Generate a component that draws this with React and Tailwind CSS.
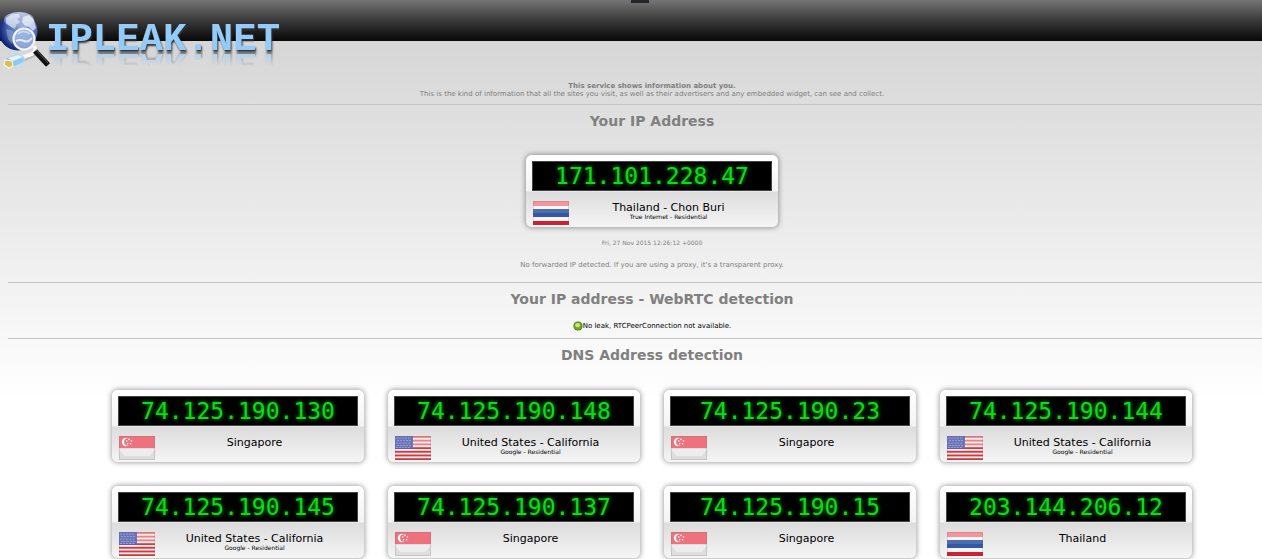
import React from 'react';

const mainAddress = {
  ip: '171.101.228.47',
  country: 'th',
  place: 'Thailand - Chon Buri',
  network: 'True Internet - Residential',
};

const dnsServers = [
  { ip: '74.125.190.130', country: 'sg', place: 'Singapore' },
  { ip: '74.125.190.148', country: 'us', place: 'United States - California', network: 'Google - Residential' },
  { ip: '74.125.190.23', country: 'sg', place: 'Singapore' },
  { ip: '74.125.190.144', country: 'us', place: 'United States - California', network: 'Google - Residential' },
  { ip: '74.125.190.145', country: 'us', place: 'United States - California', network: 'Google - Residential' },
  { ip: '74.125.190.137', country: 'sg', place: 'Singapore' },
  { ip: '74.125.190.15', country: 'sg', place: 'Singapore' },
  { ip: '203.144.206.12', country: 'th', place: 'Thailand' },
];

function ThailandFlag() {
  return (
    <>
      <rect width="36" height="24" fill="#f4f5f8" />
      <rect width="36" height="5" fill="#f2888c" />
      <rect y="8" width="36" height="8" fill="#3459a4" />
      <rect y="20" width="36" height="4" fill="#cf2030" />
    </>
  );
}

function SingaporeFlag() {
  return (
    <>
      <rect width="36" height="24" fill="#dedede" />
      <rect width="36" height="12" fill="#ec5f6c" />
      <circle cx="7" cy="6" r="4.2" fill="#fff" />
      <circle cx="8.8" cy="6" r="3.7" fill="#ec5f6c" />
      {[[10, 3.4], [12.4, 5], [11.6, 7.8], [8.6, 7.8], [7.8, 5]].map(([x, y]) => (
        <circle key={`${x}-${y}`} cx={x} cy={y} r="0.8" fill="#fff" />
      ))}
      <path d="M0 13 H36 L31 20 H5 Z" fill="#ededed" />
    </>
  );
}

function UnitedStatesFlag() {
  return (
    <>
      <rect width="36" height="24" fill="#f8eeee" />
      {[0, 1, 2, 3, 4, 5, 6].map((n) => (
        <rect key={n} y={n * 3.7} width="36" height="1.9" fill={n < 3 ? '#e87478' : '#d03a40'} />
      ))}
      <rect width="18" height="13" fill="#5661ae" />
      {[2, 4.5, 7, 9.5, 11.5].map((y, row) =>
        [2, 5, 8, 11, 14].map((x) => (
          <circle key={`${x}-${y}`} cx={x + (row % 2)} cy={y} r="0.6" fill="#c8cdec" />
        ))
      )}
    </>
  );
}

const flags = {
  th: { name: 'Thailand', Shape: ThailandFlag },
  sg: { name: 'Singapore', Shape: SingaporeFlag },
  us: { name: 'United States', Shape: UnitedStatesFlag },
};

function Flag({ country }) {
  const { name, Shape } = flags[country];
  return (
    <svg viewBox="0 0 36 24" className="w-9 h-6 shrink-0" role="img" aria-label={name}>
      <Shape />
      <rect width="36" height="12" fill="#fff" opacity="0.12" />
      <rect x="0.5" y="0.5" width="35" height="23" fill="none" stroke="#666" strokeOpacity="0.2" />
    </svg>
  );
}

function AddressCard({ ip, country, place, network }) {
  return (
    <div className="w-[252px] h-[72px] rounded-md p-1.5 shadow-[0_0_5px_1px_rgba(0,0,0,0.35)] bg-[linear-gradient(#ffffff_0px,#f4f4f4_36px,#dcdcdc_37px,#f5f5f5_72px)]">
      <div className="h-[30px] bg-black border border-[#444] flex items-center justify-center font-['DejaVu_Sans_Mono',monospace] text-[23px] leading-none text-[#0cdc18] [text-shadow:0_0_4px_#00a800]">
        {ip}
      </div>
      <div className="flex pt-2.5 pl-px">
        <Flag country={country} />
        <div className="flex-1 pt-px pr-1 text-center text-black">
          <div className="text-[11px] leading-3">{place}</div>
          {network && <div className="text-[6px] leading-[6px]">{network}</div>}
        </div>
      </div>
    </div>
  );
}

function Globe() {
  return (
    <svg viewBox="0 0 52 72" className="w-[52px] h-[72px] shrink-0" aria-hidden="true">
      <defs>
        <radialGradient id="sea" cx="0.62" cy="0.42" r="0.62">
          <stop offset="0" stopColor="#8ba4d8" />
          <stop offset="0.6" stopColor="#4c69b4" />
          <stop offset="1" stopColor="#0a1f6c" />
        </radialGradient>
        <linearGradient id="shine" x1="0" y1="0" x2="0" y2="1">
          <stop offset="0" stopColor="#fff" stopOpacity="0.8" />
          <stop offset="1" stopColor="#fff" stopOpacity="0.15" />
        </linearGradient>
      </defs>
      <circle cx="18" cy="31" r="19.5" fill="url(#sea)" />
      <path d="M6 18 L12 14 L19 14 L20 17 L17 19 L20 22 L16 25 L15 29 L11 27 L6 23 Z" fill="#c9d3ee" opacity="0.8" />
      <path d="M23 17 L29 15 L34 20 L36 28 L33 31 L29 27 L25 26 L22 22 Z" fill="#d7dff4" opacity="0.85" />
      <path d="M6 29 L13 31 L14 36 L12 44 L8 39 Z" fill="#8fa2d2" opacity="0.6" />
      <ellipse cx="19" cy="20" rx="15" ry="8" fill="url(#shine)" opacity="0.8" />
      <path d="M35 48 Q37 54 28 57 L22 60" fill="none" stroke="#888" strokeWidth="5" opacity="0.35" />
      <path d="M34 46 Q38 52 29 55 L21 58" fill="none" stroke="#f7f7f7" strokeWidth="4" />
      <circle cx="24" cy="39" r="10.5" fill="#a5bde4" fillOpacity="0.8" stroke="#eff3fb" strokeWidth="2.2" />
      <path d="M16 41 Q20 39 24 41 T32 38" fill="none" stroke="#fff" strokeWidth="2" opacity="0.75" />
      <path d="M18 34 Q23 29 30 34" fill="none" stroke="#fff" strokeWidth="2" opacity="0.45" />
      <path d="M35 51 L48 65" stroke="#111" strokeWidth="5.5" />
      <path d="M36 50 L48 63" stroke="#555" strokeWidth="1" />
      <path d="M6 58 L18 54 L24 57 L24 62 L13 67 L4 65 Z" fill="#8fc8f4" stroke="#b9def8" strokeWidth="0.8" />
      <path d="M8 58 L18 55 L23 57 L13 61 Z" fill="#e6f5ff" />
      <path d="M5 60 L12 61 L13 66 L9 68 L4 65 Z" fill="#dcc04c" stroke="#fbf8e8" strokeWidth="1.2" />
    </svg>
  );
}

function StatusDot() {
  return (
    <svg viewBox="0 0 10 10" className="w-2.5 h-2.5" aria-hidden="true">
      <circle cx="5" cy="5" r="4.6" fill="#4a6a2a" />
      <circle cx="5" cy="5" r="3.8" fill="#6fae22" />
      <ellipse cx="4.6" cy="4.2" rx="2.4" ry="2.1" fill="#c8e878" />
    </svg>
  );
}

function SectionTitle({ children }) {
  return <h2 className="text-[14px] leading-4 font-bold text-[#808080] text-center">{children}</h2>;
}

export default function App() {
  return (
    <div className="min-h-screen overflow-hidden font-['DejaVu_Sans',Verdana,sans-serif] text-[#808080] bg-[linear-gradient(#d6d6d6_40px,#ffffff_400px)]">
      <header className="relative h-[41px] bg-linear-to-b from-[#757575] to-[#080808]">
        <a href="/" className="flex items-start w-fit">
          <Globe />
          <span className="-ml-1.5 mt-7 h-6 font-['Liberation_Mono',monospace] font-bold text-[39px] leading-6 text-[#94cbf8] [text-shadow:1px_2px_2px_#333] [-webkit-box-reflect:below_0px_linear-gradient(transparent_40%,rgba(0,0,0,0.6))]">
            IPLEAK.NET
          </span>
        </a>
        <div className="absolute top-0 inset-x-0 flex justify-center pl-[18px]">
          <div className="w-[18px] h-[3px] bg-[#222529]" />
        </div>
      </header>

      {/* the content column runs a little past the right edge */}
      <main className="ml-2 -mr-[34px] text-center">
        <div className="pt-[41px] pb-1.5 text-[7px] leading-2">
          <p className="font-bold">This service shows information about you.</p>
          <p>This is the kind of information that all the sites you visit, as well as their advertisers and any embedded widget, can see and collect.</p>
        </div>

        <section className="border-t border-[#c4c4c4] pt-2 pb-[13px]">
          <SectionTitle>Your IP Address</SectionTitle>
          <div className="flex justify-center pt-[26px]">
            <AddressCard {...mainAddress} />
          </div>
          <p className="pt-3 text-[6px] leading-2">Fri, 27 Nov 2015 12:26:12 +0000</p>
          <p className="pt-3.5 text-[7px] leading-2">No forwarded IP detected. If you are using a proxy, it's a transparent proxy.</p>
        </section>

        <section className="border-t border-[#c4c4c4] pt-2 pb-[7px]">
          <SectionTitle>Your IP address - WebRTC detection</SectionTitle>
          <div className="flex items-center justify-center pt-3.5 text-[7px] leading-2 text-black">
            <StatusDot />
            <span>No leak, RTCPeerConnection not available.</span>
          </div>
        </section>

        <section className="border-t border-[#c4c4c4] pt-2">
          <SectionTitle>DNS Address detection</SectionTitle>
          <div className="flex flex-wrap justify-center gap-6 pt-[27px] mx-auto max-w-[1100px]">
            {dnsServers.map((server) => (
              <AddressCard key={server.ip} {...server} />
            ))}
          </div>
        </section>
      </main>
    </div>
  );
}
